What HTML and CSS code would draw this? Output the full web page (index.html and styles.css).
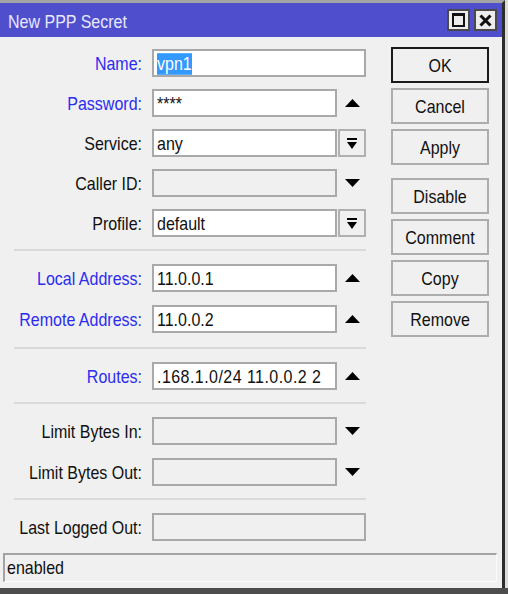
FILE: index.html
```html
<!DOCTYPE html>
<html>
<head>
<meta charset="utf-8">
<link rel="stylesheet" href="styles.css">
</head>
<body>
<div class="desk">
  <div class="window">
    <div class="titlebar">
      <span class="title"><span class="t">New PPP Secret</span></span>
      <span class="tb-btn"><svg width="13" height="14" viewBox="0 0 13 14"><rect x="1" y="1.5" width="11" height="11.5" fill="none" stroke="#111" stroke-width="2"/><rect x="0" y="0" width="13" height="3" fill="#111"/></svg></span>
      <span class="tb-btn"><svg width="13" height="13" viewBox="0 0 13 13"><path d="M1.5 1.5 L11.5 11.5 M11.5 1.5 L1.5 11.5" stroke="#111" stroke-width="3"/></svg></span>
    </div>
    <div class="main">
      <div class="form">
        <div class="section">
          <div class="row"><span class="lbl blue"><span class="t">Name:</span></span><div class="field wide"><span class="t sel">vpn1</span></div></div>
          <div class="row"><span class="lbl blue"><span class="t">Password:</span></span><div class="field"><span class="t">****</span></div><span class="acc"><svg width="15" height="8" viewBox="0 0 15 8"><polygon points="0,8 7.5,0 15,8" fill="#000"/></svg></span></div>
          <div class="row"><span class="lbl"><span class="t">Service:</span></span><div class="field"><span class="t">any</span></div><span class="acc dd"><svg width="10" height="11" viewBox="0 0 10 11"><rect x="0" y="0" width="10" height="2" fill="#000"/><polygon points="0,4 10,4 5,11" fill="#000"/></svg></span></div>
          <div class="row"><span class="lbl"><span class="t">Caller ID:</span></span><div class="field dis"></div><span class="acc"><svg width="15" height="8" viewBox="0 0 15 8"><polygon points="0,0 15,0 7.5,8" fill="#000"/></svg></span></div>
          <div class="row"><span class="lbl"><span class="t">Profile:</span></span><div class="field"><span class="t">default</span></div><span class="acc dd"><svg width="10" height="11" viewBox="0 0 10 11"><rect x="0" y="0" width="10" height="2" fill="#000"/><polygon points="0,4 10,4 5,11" fill="#000"/></svg></span></div>
        </div>
        <div class="sep"></div>
        <div class="section loose">
          <div class="row"><span class="lbl blue"><span class="t">Local Address:</span></span><div class="field"><span class="t">11.0.0.1</span></div><span class="acc"><svg width="15" height="8" viewBox="0 0 15 8"><polygon points="0,8 7.5,0 15,8" fill="#000"/></svg></span></div>
          <div class="row"><span class="lbl blue"><span class="t">Remote Address:</span></span><div class="field"><span class="t">11.0.0.2</span></div><span class="acc"><svg width="15" height="8" viewBox="0 0 15 8"><polygon points="0,8 7.5,0 15,8" fill="#000"/></svg></span></div>
        </div>
        <div class="sep roomy"></div>
        <div class="section">
          <div class="row"><span class="lbl blue"><span class="t">Routes:</span></span><div class="field"><span class="t wide-digits">.168.1.0/24 11.0.0.2 2</span></div><span class="acc"><svg width="15" height="8" viewBox="0 0 15 8"><polygon points="0,8 7.5,0 15,8" fill="#000"/></svg></span></div>
        </div>
        <div class="sep"></div>
        <div class="section loose">
          <div class="row"><span class="lbl"><span class="t">Limit Bytes In:</span></span><div class="field dis"></div><span class="acc"><svg width="15" height="8" viewBox="0 0 15 8"><polygon points="0,0 15,0 7.5,8" fill="#000"/></svg></span></div>
          <div class="row"><span class="lbl"><span class="t">Limit Bytes Out:</span></span><div class="field dis"></div><span class="acc"><svg width="15" height="8" viewBox="0 0 15 8"><polygon points="0,0 15,0 7.5,8" fill="#000"/></svg></span></div>
        </div>
        <div class="sep"></div>
        <div class="section">
          <div class="row"><span class="lbl"><span class="t">Last Logged Out:</span></span><div class="field wide dis"></div></div>
        </div>
      </div>
      <div class="buttons">
        <div class="btn default"><span class="t">OK</span></div>
        <div class="btn"><span class="t">Cancel</span></div>
        <div class="btn"><span class="t">Apply</span></div>
        <div class="btn group"><span class="t">Disable</span></div>
        <div class="btn"><span class="t">Comment</span></div>
        <div class="btn"><span class="t">Copy</span></div>
        <div class="btn"><span class="t">Remove</span></div>
      </div>
    </div>
    <div class="status"><span class="t">enabled</span></div>
  </div>
</div>
</body>
</html>
```

FILE: styles.css
```css
html, body {
  margin: 0;
  padding: 0;
}
body {
  width: 508px;
  height: 594px;
  overflow: hidden;
  background: #4d4d4d;
  font-family: "Liberation Sans", Arial, sans-serif;
  font-size: 16px;
  color: #111;
}
.t {
  display: inline-block;
  transform: scaleY(1.2);
  white-space: nowrap;
}
.desk {
  height: 588px;
  background: #dcdcdc;
}
.window {
  width: 505px;
  height: 588px;
  box-sizing: border-box;
  border-top: 3px solid #a4a4a4;
  border-right: 3px solid #2d2d2d;
  background: #f0f0f0;
  display: flex;
  flex-direction: column;
}
.titlebar {
  height: 34px;
  flex: none;
  background: #4f4fcd;
  display: flex;
  align-items: center;
  gap: 4px;
  padding: 0 5px 0 8px;
}
.title {
  flex: 1;
  color: #e8e8ff;
  padding-top: 4px;
}
.tb-btn {
  width: 23px;
  height: 22px;
  box-sizing: border-box;
  border: 2px solid #4a4a4a;
  background: #ececec;
  display: flex;
  align-items: center;
  justify-content: center;
}
.main {
  flex: 1;
  display: flex;
}
.form {
  width: 366px;
  padding-top: 12px;
}
.section {
  display: flex;
  flex-direction: column;
  gap: 12px;
}
.section.loose {
  gap: 13px;
}
.row {
  display: grid;
  grid-template-columns: 152px 186px 28px;
  height: 28px;
  align-items: center;
}
.lbl {
  text-align: right;
  padding-right: 10px;
  padding-top: 2px;
  white-space: nowrap;
}
.blue {
  color: #2c2cf0;
}
.field {
  width: 185px;
  height: 28px;
  box-sizing: border-box;
  border: 2px solid #a9a9a9;
  background: #fff;
  padding: 3px 2px 0 3px;
  line-height: 20px;
  white-space: nowrap;
  overflow: hidden;
}
.field.wide {
  grid-column: 2 / 4;
  width: 214px;
}
.field.dis {
  background: #f0f0f0;
}
.wide-digits {
  letter-spacing: 0.45px;
}
.sel {
  background: #3399ff;
  color: #fff;
  line-height: 18px;
}
.acc {
  height: 28px;
  box-sizing: border-box;
  display: flex;
  align-items: center;
  justify-content: center;
}
.acc.dd {
  border: 2px solid #b0b0b0;
  background: #f0f0f0;
}
.sep {
  height: 2px;
  background: #dadada;
  margin: 12px 0 13px 14px;
  width: 352px;
}
.sep.roomy {
  margin-top: 14px;
}
.buttons {
  margin-left: 25px;
  padding-top: 10px;
  display: flex;
  flex-direction: column;
  gap: 5px;
}
.btn {
  width: 98px;
  height: 36px;
  box-sizing: border-box;
  border: 2px solid #adadad;
  background: #f0f0f0;
  display: flex;
  align-items: center;
  justify-content: center;
  padding-top: 1px;
}
.btn.default {
  border-color: #1a1a1a;
}
.btn.group {
  margin-top: 8px;
}
.status {
  flex: none;
  height: 29px;
  box-sizing: border-box;
  margin: 0 5px 6px 3px;
  border-top: 2px solid #a3a3a3;
  border-left: 2px solid #a3a3a3;
  border-right: 1px solid #fbfbfb;
  border-bottom: 1px solid #fbfbfb;
  padding: 2px 0 0 2px;
  line-height: 22px;
}
```
